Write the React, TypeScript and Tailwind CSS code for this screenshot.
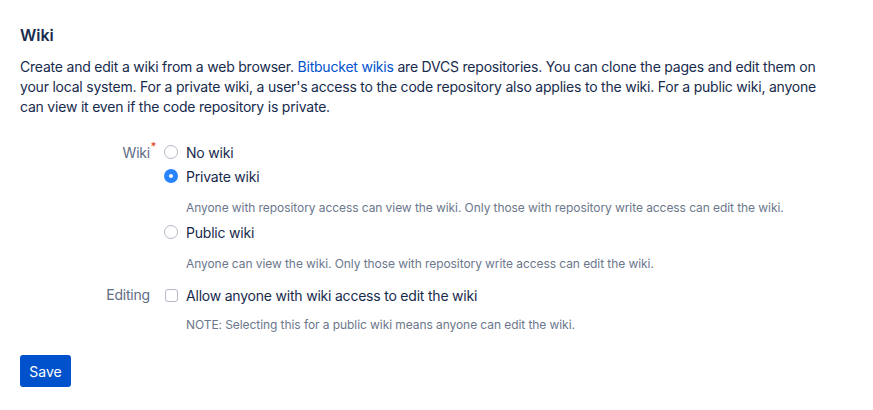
import { useState } from 'react';

const font = { fontFamily: 'Inter, "Liberation Sans", sans-serif' };

function Radio({ checked, label, onSelect }: { checked: boolean; label: string; onSelect: () => void }) {
  return (
    <label className="flex h-6 cursor-pointer items-center gap-[8px]" onClick={onSelect}>
      {checked ? (
        <span className="flex h-[14px] w-[14px] items-center justify-center rounded-full bg-[#2684FF]">
          <span className="h-[4px] w-[4px] rounded-full bg-white" />
        </span>
      ) : (
        <span className="h-[14px] w-[14px] rounded-full border border-[#B3BAC5] bg-white" />
      )}
      <span className="text-[14px] tracking-[-0.015em] text-[#172B4D]">{label}</span>
    </label>
  );
}

function Help({ children }: { children: React.ReactNode }) {
  return <p className="ml-[22px] mt-3 text-[12px] leading-4 tracking-[-0.006em] text-[#6B778C]">{children}</p>;
}

export default function App() {
  const [wiki, setWiki] = useState<'none' | 'private' | 'public'>('private');
  const [editing, setEditing] = useState(false);

  return (
    <div className="min-h-[410px] bg-white px-5 pt-[25px] text-[#172B4D]" style={font}>
      <h2 className="text-[16px] font-semibold leading-5">Wiki</h2>
      <p className="mt-3 max-w-[815px] text-[14px] leading-5 tracking-[-0.015em]">
        Create and edit a wiki from a web browser. <a className="text-[#0052CC]">Bitbucket wikis</a> are DVCS
        repositories. You can clone the pages and edit them on your local system. For a private wiki, a user's
        access to the code repository also applies to the wiki. For a public wiki, anyone can view it even if the
        code repository is private.
      </p>

      <div className="mt-[23px] flex">
        <div className="w-[130px] text-right">
          <span className="relative inline-block h-6 text-[14px] leading-6 tracking-[-0.015em] text-[#5E6C84]">
            Wiki
            <span className="absolute -right-[6px] -top-[3px] text-[11px] leading-4 text-[#DE350B]">*</span>
          </span>
        </div>
        <div className="ml-[14px]">
          <Radio checked={wiki === 'none'} label="No wiki" onSelect={() => setWiki('none')} />
          <Radio checked={wiki === 'private'} label="Private wiki" onSelect={() => setWiki('private')} />
          <Help>Anyone with repository access can view the wiki. Only those with repository write access can edit the wiki.</Help>
          <div className="mt-1">
            <Radio checked={wiki === 'public'} label="Public wiki" onSelect={() => setWiki('public')} />
          </div>
          <Help>Anyone can view the wiki. Only those with repository write access can edit the wiki.</Help>
        </div>
      </div>

      <div className="mt-[11px] flex">
        <div className="w-[130px] text-right text-[14px] leading-6 tracking-[-0.015em] text-[#5E6C84]">Editing</div>
        <div className="ml-[15px]">
          <label className="flex h-6 cursor-pointer items-center gap-[8px]" onClick={() => setEditing(!editing)}>
            <span
              className={
                editing
                  ? 'h-[13px] w-[13px] rounded-[3px] bg-[#2684FF]'
                  : 'h-[13px] w-[13px] rounded-[3px] border border-[#B3BAC5] bg-white'
              }
            />
            <span className="text-[14px] tracking-[-0.015em] text-[#172B4D]">
              Allow anyone with wiki access to edit the wiki
            </span>
          </label>
          <p className="ml-[21px] mt-[10px] text-[12px] leading-4 tracking-[-0.006em] text-[#6B778C]">
            NOTE: Selecting this for a public wiki means anyone can edit the wiki.
          </p>
        </div>
      </div>

      <button
        type="button"
        className="mt-[22px] h-8 w-[51px] rounded-[3px] bg-[#0052CC] text-[14px] text-white"
      >
        Save
      </button>
    </div>
  );
}
